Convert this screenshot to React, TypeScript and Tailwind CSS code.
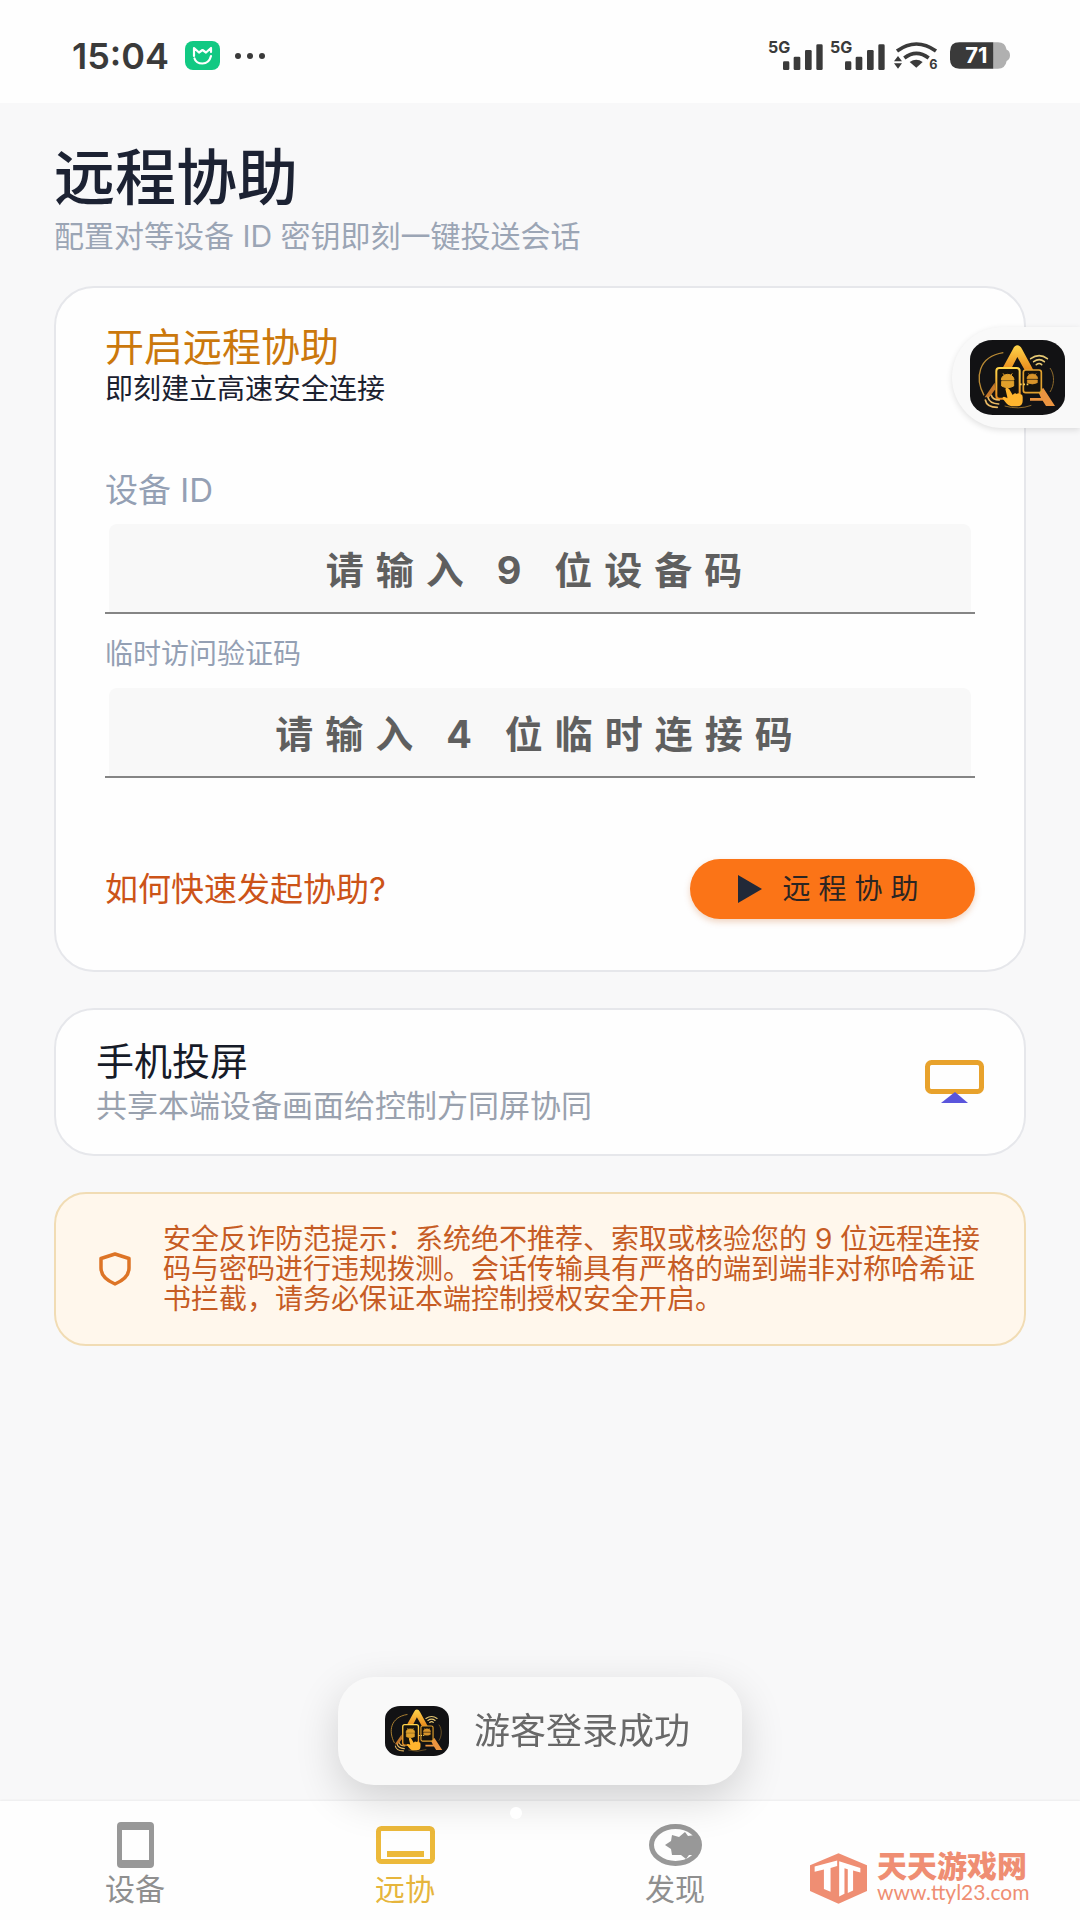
import * as React from 'react'
import clsx from 'clsx'

const AppLogo = ({ className }: { className?: string }) => (
  <svg className={className} viewBox="0 0 285 225" preserveAspectRatio="none" fill="none" aria-hidden="true">
    <defs>
      <linearGradient id="gold" x1="0" y1="0" x2="0" y2="1">
        <stop offset="0" stopColor="#ffd54a" />
        <stop offset="1" stopColor="#e98a1c" />
      </linearGradient>
    </defs>
    <rect width="285" height="225" rx="68" ry="58" fill="#121214" />
    <path d="M100 38C24 50 14 114 42 166" stroke="#b98a34" strokeWidth="4" />
    <path d="M240 84C256 106 252 138 240 156M104 198Q146 210 184 196" stroke="#8d6a2c" strokeWidth="3" />
    <path d="M142 16Q150 16 156 27L190 90H164L142 51L126 82H99L129 27Q134 16 142 16Z" fill="url(#gold)" />
    <path d="M74 128L44 172H58L76 148Z" fill="#c4772a" />
    <path d="M220 144L255 198H228L218 182H180V174H213L204 154Z" fill="#eb9440" />
    <rect x="79" y="84" width="70" height="92" rx="9" fill="#16130d" stroke="url(#gold)" strokeWidth="6" />
    <rect x="160" y="90" width="54" height="68" rx="7" fill="#16130d" stroke="#e2a12f" strokeWidth="5" />
    <path d="M94 120a19 17 0 0 1 38 0ZM95 124h36v14q-18 10 -36 0ZM99 100l6 8M127 100l-6 8" fill="#e0a02b" stroke="#e0a02b" strokeWidth="3" />
    <path d="M171 116a16 14 0 0 1 32 0ZM172 120h30v8q-15 8 -30 0ZM175 100l5 7M199 100l-5 7" fill="#d8942a" stroke="#d8942a" strokeWidth="2" />
    <path d="M150 133h30" stroke="#ffd35a" strokeWidth="5" strokeDasharray="5 5" />
    <path d="M106 146q6 -6 12 2l10 17q6 -8 12 -3q6 -5 10 1q8 -2 8 8v12q0 16 -17 16h-17q-9 -1 -15 -9l-12 -15q3 -9 14 0l2 1Z" fill="#ffb52e" />
    <path d="M182 56q26 -18 50 0M191 65q17 -12 32 0M199 74q9 -7 16 0" stroke="#e6c873" strokeWidth="5" strokeLinecap="round" />
    <path d="M46 180q4 22 36 22M54 172q4 18 32 20M64 166q4 14 24 14" stroke="#e8b963" strokeWidth="5" strokeLinecap="round" />
  </svg>
)

const Signal = () => (
  <svg className="h-[30px] w-[55px] overflow-visible" viewBox="0 0 165 90" fill="#3a3a3a" aria-hidden="true">
    <text x="0" y="36" fontFamily="Inter, sans-serif" fontWeight="700" fontSize="48">5G</text>
    <rect x="45" y="61" width="19" height="26" rx="4" />
    <rect x="77" y="47" width="20" height="40" rx="4" />
    <rect x="111" y="27" width="20" height="60" rx="4" />
    <rect x="145" y="10" width="19" height="77" rx="4" />
  </svg>
)

const Wifi = () => (
  <svg className="h-[28px] w-[45px] overflow-visible" viewBox="0 0 135 84" fill="#3a3a3a" aria-hidden="true">
    <path d="M9 27Q67 -15 126 27M31 48Q67 20 104 48" fill="none" stroke="#3a3a3a" strokeWidth="11" />
    <path d="M47 60Q67 47 86 60L67 77Z" />
    <path d="M0 58L12 42L24 58ZM0 64L12 80L24 64Z" />
    <text x="106" y="81" fontFamily="Inter, sans-serif" fontWeight="700" fontSize="38">6</text>
  </svg>
)

const Battery = () => (
  <svg className="h-[27px] w-[61px] overflow-visible" viewBox="0 0 183 81" aria-hidden="true">
    <path d="M130 1h14q22 0 26 22q10 4 10 17t-10 17q-4 23 -26 23h-14Z" fill="#b0b0b0" />
    <path d="M28 1h102v79H28Q0 80 0 52V29Q0 1 28 1Z" fill="#3a3a3a" />
    <text x="46" y="64" fontFamily="Inter, sans-serif" fontWeight="700" fontSize="66" fill="#fff">71</text>
  </svg>
)

const StatusBar = () => (
  <header className="flex h-[103px] items-center justify-between bg-[#fefefe] pt-2 pr-[69px] pl-[72px] text-[#3a3a3a]">
    <div className="flex items-center">
      <time className="text-[36px] leading-10 font-semibold">15:04</time>
      <svg className="ml-4 h-[29px] w-[35px]" viewBox="0 0 35 29" fill="none" aria-hidden="true">
        <rect width="35" height="29" rx="8" fill="#12c983" />
        <path d="M9 15V7L14 11.500L17.500 9L21 11.500L26 7V11" stroke="#fff" strokeWidth="2.200" strokeLinejoin="round" strokeLinecap="round" />
        <path d="M9.500 17.500Q11 22.500 17.500 22.500T26 15" stroke="#fff" strokeWidth="2.200" strokeLinecap="round" />
      </svg>
      <svg className="ml-[14px] h-2 w-8" viewBox="0 0 32 8" fill="#3a3a3a" aria-hidden="true">
        <circle cx="4" cy="4" r="3" /><circle cx="16" cy="4" r="3" /><circle cx="28" cy="4" r="3" />
      </svg>
    </div>
    <div className="flex items-center">
      <Signal />
      <div className="ml-[7px]"><Signal /></div>
      <div className="ml-[9px]"><Wifi /></div>
      <div className="ml-[11px]"><Battery /></div>
    </div>
  </header>
)

interface CodeFieldProps { id: string
                         , label: string
                         , placeholder: string
                         , labelClass: string
                         }

const CodeField = ({ id, label, placeholder, labelClass }: CodeFieldProps) => (
  <div>
    <label htmlFor={id} className={clsx('block leading-10 text-[#94a0b4]', labelClass)}>{label}</label>
    <div className="mt-[14px] border-b-2 border-[#858585] px-1">
      <input id={id}
             inputMode="numeric"
             placeholder={placeholder}
             className="block h-[88px] w-full rounded-t-lg bg-[#f8f8f8] pt-1 text-center text-[38px] font-bold tracking-[12px] text-[#5f5f5f] outline-none placeholder:text-[#5f5f5f]" />
    </div>
  </div>
)

const AssistCard = () => (
  <section className="mt-7 rounded-[40px] border-2 border-[#e6e7eb] bg-[#fefefe] px-[49px] pt-[34px] pb-[51px]">
    <h2 className="text-[39px] leading-[50px] text-[#cb780c]">开启远程协助</h2>
    <p className="text-[28px] leading-[34px] text-[#1b2130]">即刻建立高速安全连接</p>
    <form className="mt-16" onSubmit={e => e.preventDefault()}>
      <CodeField id="device" label="设备 ID" placeholder="请输入 9 位设备码" labelClass="text-[33px]" />
      <div className="mt-5">
        <CodeField id="code" label="临时访问验证码" placeholder="请输入 4 位临时连接码" labelClass="text-[28px]" />
      </div>
      <div className="mt-[81px] flex items-center justify-between">
        <a href="#help" className="text-[33px] leading-10 text-[#cc5318]">如何快速发起协助?</a>
        <button type="submit" className="flex h-[60px] w-[285px] items-center justify-center gap-5 rounded-full bg-[#fb7417] text-[28px] tracking-[8px] text-[#2b2522] shadow-[0_3px_6px_rgba(200,90,20,0.25)]">
          <svg className="h-7 w-6" viewBox="0 0 24 28" fill="#222938" aria-hidden="true"><path d="M0 0L24 14L0 28Z" /></svg>
          远程协助
        </button>
      </div>
    </form>
  </section>
)

const CastCard = () => (
  <button className="mt-9 flex w-full items-center justify-between rounded-[40px] border-2 border-[#e6e7eb] bg-[#fefefe] px-10 py-[26px] text-left">
    <span className="block pb-[2px]">
      <span className="block text-[38px] leading-[50px] text-[#161b28]">手机投屏</span>
      <span className="block text-[31px] leading-10 text-[#99a1ae]">共享本端设备画面给控制方同屏协同</span>
    </span>
    <svg className="h-[44px] w-[59px]" viewBox="0 0 59 44" fill="none" aria-hidden="true">
      <rect x="2.500" y="2.500" width="54" height="29" rx="4" stroke="#e8a22c" strokeWidth="5" />
      <path d="M30 32L43 43H16Z" fill="#5a55dc" />
    </svg>
  </button>
)

const Notice = () => (
  <aside className="mt-9 flex items-center gap-8 rounded-[32px] border-2 border-[#f1dcb4] bg-[#fff7ec] py-[30px] pr-[36px] pl-[43px]">
    <svg className="h-9 w-8 shrink-0" viewBox="0 0 32 36" fill="none" aria-hidden="true">
      <path d="M16 3L30 7.500V17Q30 27 16 33Q2 27 2 17V7.500Z" stroke="#dd7426" strokeWidth="3.500" strokeLinejoin="round" />
    </svg>
    <p className="text-[28px] leading-[30px] text-[#c65c24]">
      安全反诈防范提示：系统绝不推荐、索取或核验您的 9 位远程连接码与密码进行违规拨测。会话传输具有严格的端到端非对称哈希证书拦截，请务必保证本端控制授权安全开启。
    </p>
  </aside>
)

const Toast = () => (
  <div role="status" className="fixed bottom-[135px] left-1/2 z-10 flex h-[108px] w-[404px] -translate-x-1/2 items-center gap-[25px] rounded-[36px] bg-[#f9f9f9] pl-[47px] shadow-[0_14px_44px_rgba(0,0,0,0.16)]">
    <AppLogo className="h-[50px] w-[64px]" />
    <span className="text-[36px] leading-[50px] whitespace-nowrap text-[#686868]">游客登录成功</span>
    <span className="absolute -bottom-[34px] left-[172px] size-3 rounded-full bg-white" />
  </div>
)

const tabs = [
  { name: '设备', active: false, icon:
    <svg className="h-[46px] w-[37px]" viewBox="0 0 37 46" aria-hidden="true">
      <path fillRule="evenodd" d="M4 0H33Q37 0 37 4V42Q37 46 33 46H4Q0 46 0 42V4Q0 0 4 0ZM5 8V38H32V8Z" fill="#989898" />
    </svg> },
  { name: '远协', active: true, icon:
    <svg className="h-[38px] w-[59px]" viewBox="0 0 59 38" fill="none" aria-hidden="true">
      <rect x="2.500" y="2.500" width="54" height="33" rx="3" stroke="#ecb93a" strokeWidth="5" />
      <path d="M11 28H48" stroke="#ecb93a" strokeWidth="6" />
    </svg> },
  { name: '发现', active: false, icon:
    <svg className="h-[42px] w-[53px]" viewBox="0 0 53 42" aria-hidden="true">
      <ellipse cx="26.500" cy="21" rx="24" ry="18.500" fill="none" stroke="#989898" strokeWidth="5" />
      <path d="M16 21L22 17L23 11L30 13L36 8L39 12L46 11L51 21L46 31L40 31L37 35L32 31L23 31L22 25Z" fill="#989898" />
    </svg> },
]

const TabBar = () => (
  <footer className="grid h-[119px] grid-cols-4 bg-[#fefefe] shadow-[0_-1px_2px_rgba(0,0,0,0.05)]">
    {tabs.map(tab =>
      <button key={tab.name} aria-current={tab.active ? 'page' : undefined} className="flex flex-col items-center pt-[21px]">
        <span className="flex h-[46px] items-center">{tab.icon}</span>
        <span className={clsx('mt-px text-[30px] leading-10', tab.active ? 'text-[#e6b53c]' : 'text-[#8f8f8f]')}>{tab.name}</span>
      </button>
    )}
    <a href="#site" className="flex items-end gap-[10px] pb-4">
      <svg className="h-[51px] w-[57px] shrink-0" viewBox="0 0 172 152" aria-hidden="true">
        <path d="M86 0L172 36V114L86 152L0 114V36Z" fill="#ef8e73" />
        <path d="M14 40L82 22V38L62 44V116L42 108V49L14 56ZM88 24L152 44V58L130 52V112L114 120V48L104 45V122L88 130Z" fill="#fff" />
      </svg>
      <span className="block text-[#ef8e73]">
        <span className="block text-[30px] leading-7 font-black">天天游戏网</span>
        <span className="block font-[Lato] text-[21px] leading-6">www.ttyl23.com</span>
      </span>
    </a>
  </footer>
)

export default function App() {
  return (
    <div className="relative flex min-h-screen flex-col bg-[#f8f8f9] font-[Inter,'Noto_Sans_CJK_SC',sans-serif]" lang="zh-CN">
      <StatusBar />
      <main className="flex-1 px-[54px] pt-[38px] pb-9">
        <h1 className="text-[61px] leading-[74px] font-medium text-[#1c2233]">远程协助</h1>
        <p className="text-[30px] leading-[43px] text-[#9ba5b5]">配置对等设备 ID 密钥即刻一键投送会话</p>
        <AssistCard />
        <CastCard />
        <Notice />
      </main>
      <button aria-label="打开悬浮窗" className="absolute top-[327px] right-0 flex h-[101px] w-[128px] items-center rounded-l-full bg-[#f9f9f9] pl-[18px] shadow-[0_2px_6px_rgba(0,0,0,0.12)]">
        <AppLogo className="h-[75px] w-[95px]" />
      </button>
      <Toast />
      <TabBar />
    </div>
  )
}
